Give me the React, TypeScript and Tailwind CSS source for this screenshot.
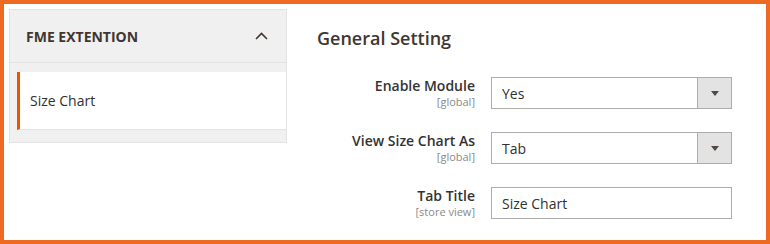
import React from 'react';

const font = { fontFamily: '"Open Sans", "Liberation Sans", sans-serif' };

function SelectBox({ value }: { value: string }) {
  return (
    <div className="flex h-[32px] w-[241px] border border-[#adadad] bg-white">
      <div className="flex flex-1 items-center pl-[10px] text-[14px] text-[#303030]">{value}</div>
      <div className="flex w-[34px] items-center justify-center border-l border-[#adadad] bg-[#e3e3e3]">
        <svg width="8" height="5" viewBox="0 0 8 5">
          <path d="M0 0h8L4 5z" fill="#514943" />
        </svg>
      </div>
    </div>
  );
}

function TextBox({ value }: { value: string }) {
  return (
    <div className="flex h-[32px] w-[241px] items-center border border-[#adadad] bg-white pl-[10px] text-[14px] text-[#303030]">
      {value}
    </div>
  );
}

function Field({ label, scope, children }: { label: string; scope: string; children: React.ReactNode }) {
  return (
    <div className="flex h-[32px] gap-[16px]">
      <div className="flex w-[158px] flex-col items-end">
        <span className="text-[14px] leading-[18px] font-semibold text-[#333333]">{label}</span>
        <span className="text-[11px] leading-[14px] text-[#8a8a8a]">{scope}</span>
      </div>
      {children}
    </div>
  );
}

export default function App() {
  return (
    <div className="flex h-[244px] w-[770px] border-4 border-[#ee6a22] bg-white pl-[5px] pt-[5px]" style={font}>
      <div className="w-[278px] self-start border border-[#e3e3e3] bg-[#f0f0f0]">
        <div className="flex h-[53px] items-center justify-between border-b border-[#e3e3e3] pl-[16px] pr-[18px]">
          <span className="text-[14px] font-bold text-[#41362f]">FME EXTENTION</span>
          <svg width="13" height="8" viewBox="0 0 13 8">
            <path d="M1 7l5.5-5.5L12 7" fill="none" stroke="#41362f" strokeWidth="1.6" />
          </svg>
        </div>
        <div className="pb-[12px] pl-[7px] pt-[9px]">
          <div className="flex h-[58px] items-center border-b border-l-[3px] border-b-[#e3e3e3] border-l-[#eb5202] bg-white pl-[10px] text-[14px] text-[#303030]">
            Size Chart
          </div>
        </div>
      </div>

      <div className="flex flex-1 flex-col pl-[30px]">
        <h2 className="mt-[17px] text-[18px] leading-[24px] font-semibold text-[#41362f]">General Setting</h2>
        <div className="mt-[27px] flex flex-col gap-[23px]">
          <Field label="Enable Module" scope="[global]">
            <SelectBox value="Yes" />
          </Field>
          <Field label="View Size Chart As" scope="[global]">
            <SelectBox value="Tab" />
          </Field>
          <Field label="Tab Title" scope="[store view]">
            <TextBox value="Size Chart" />
          </Field>
        </div>
      </div>
    </div>
  );
}
